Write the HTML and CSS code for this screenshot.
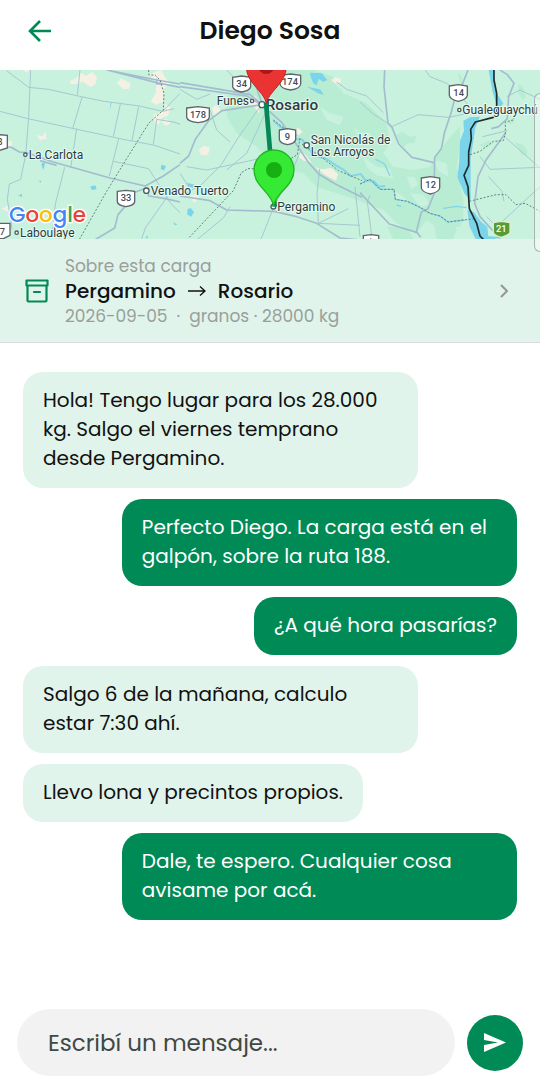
FILE: index.html
```html
<!DOCTYPE html>
<html lang="es">
<head>
<meta charset="utf-8">
<meta name="viewport" content="width=device-width, initial-scale=1">
<title>Diego Sosa</title>
<link rel="stylesheet" href="styles.css">
</head>
<body>
<div class="screen">
  <header class="topbar">
    <button class="back" type="button" aria-label="Volver">
      <svg viewBox="0 0 24 24" width="24" height="24"><path d="M23 12H2M12 2 2 12l10 10" fill="none" stroke="currentColor" stroke-width="2.6"/></svg>
    </button>
    <h1 class="title">Diego Sosa</h1>
  </header>

  <div class="map">
    <svg class="map-canvas" viewBox="0 30 1620 507" preserveAspectRatio="xMidYMid slice" role="img" aria-label="Mapa de la ruta">
      <rect class="land" x="0" y="0" width="1620" height="560"/>
      <g class="green">
        <path d="M860 30l80 0 60 20 30 50 70 30 60 60 10 60-20 30 30 40 60 10 50-10 30-50 40-50 20-20 0 60-10 60 20 100 0 60-10 20-60 10-40-30-30 40-60-30-40-40-80-30-60-20-60-20-40-40-80-20-60-60-60-40-30-50 0-60z"/>
        <path d="M1187 225l20-10 25 15 20-5-10 25-20 0-10 12-12-10zM1545 246l26 10 12 20-4 12-16-6zM1556 72l14 10 8 30-10 8-14-22zM1374 38l10 10 6 26-10-4zM1436 256l30-14 16 6-26 18zM1520 186l20-14 4 14-14 8zM1160 500l60 0 20 37-60 0zM1300 480l50 0 20 30-10 27-50 0z"/>
      </g>
      <g class="pale">
        <path d="M960 140l30 20 40 10-10 26-40-16zM1090 290l40 30 40 6 10 30-50-10-30-26zM1300 300l40 10 6 40-30-16zM1230 400l40 4 20 30-30 6zM1000 60l20-6 20 22-24 10zM1060 200l20 20 30 0 10 30-40-10zM1220 350l24 0 10 24-20 14zM1180 390l30 20 20 20-40-10z"/>
      </g>
      <g class="town">
        <path d="M211 62l18-8 14-16 14 10 20-12 14 16-4 20-16 10-24-18-12 8-24 0zM350 70l14-16 12 8 16 8-4 16-16 2zM452 125l16-28 0-26-20-30 36-11 10 20 18 22-22 14 0 40-22 8zM460 165l30-12 8-22 14 14-8 22-18 6-10 22-12-6zM482 184l18-8 12 14-14 8zM110 226l18 2 8-14 4 26-10-4-10 6zM20 240l18 6-6 18-12-6zM4 446l22-10 0 20zM70 30l18 0-8 8z"/>
        <path d="M596 270l14-12 20 4-6 22-20 2zM637 145l10-10 14 12-4 14-16 4zM745 120l20-12 16 16-4 36-14-18-16-6zM895 276l20 6 20 26-24-6-14-10zM946 322l22 6 26-4 20 18-6 20-16-8-18-10zM570 408l18-6 12 14-20 12zM880 210l16-6 12 12-12 10zM994 60l10-8 20 4-4 14-16 0zM1380 285l6-10 0 40-8 40-4-14z"/>
      </g>
      <g class="water">
        <path d="M336 126l-8 28 4-24zM126 308h10l-6 22-6-14zM270 380l16-4 4 12-14 2zM484 314l14 4-6 14-10-6zM54 406l12-4 0 10zM118 360l6 4-4 6zM520 486l12 8-8 2zM436 532l8-6-2 10z"/>
        <path d="M562 448l10-4 10 12-8 14-12-6zM562 368l22 6-6 10-16-6zM930 38l36 2 16 20-12 6-14-10-6 20-10-6-8-20zM920 80l40 8 12 16-18-4-20-12z"/>
        <path d="M1410 172l30-2-14 34-6 40-8 50 0 60 0 66-18-18-22-50 6-50 2-60 12-30-2-30zM1402 450l20 6 22 30 18 14 4 40-38 0-20-42zM1460 528l46 4-40 8zM1466 30h14l8 66 22 34-10 14-12-16-10-32z"/>
        <path class="stream" d="M820 182l20 18 22 12 14 10 14 16 18 2 10 20 30 28 30 8 30 20 24 14 20 18 30-6 14 18 26 4 14 16 20-2"/>
        <path class="stream thin" d="M1330 445l40-6 30 4M1170 348l-16-36-28-14M1190 435l14 4"/>
        <path class="stream thin" d="M1080 372l30-14 30 30 42 0 4 30 36 6 34 16 34 20 30 8 24 18 50-6"/>
      </g>

      <g class="road">
        <path d="M20 32l66 50 60 6 88 20 78 16 106 14 70 16 34-8M92 30l-6 140-8 104M240 30l-8 76M0 154l84 22 138 30 138 30 104 20 76 26M246 112l-28 94M230 206l-18 118M362 128l-22 102M416 140l-20 102M356 236l-28 112M194 322l-28 110-8 80M78 280l-16 78-34 14-6 46 10 60 4 30M340 304l106 22 66 104 28 28M424 540l12-36 66-94M460 254l10-76 50 8 20 6M488 154l52-54"/>
        <path d="M540 88l50 30 40-16M680 30l68 70 34 36M630 150l20 60 40 36M780 140l-66 94-50 80-60 60-64 36M800 150l-60 130-60 50M560 320l60 10 140-30 60-20M690 440l-20 34-80 66M822 440l-40 100M822 440l48-90 30-74M955 490l-4-90 8-74M955 490l90-44M955 490l125 6M1065 380l15 150M540 340l26 40M1010 66l30 22 60 20 50 50"/>
        <path d="M1276 30l14 20 50 20 20 14M1080 126l40 36 54 34M1175 200l80-36 90 8 60-12M1448 230l74-18M1440 290l30 38 150-6M1466 350l40 44 6 30M1620 380l-130 120-30-30M1110 405l-8 20 14 110M1518 234l102 90M1520 110l40-20 60 28M1380 156l22-24-24-30"/>
      </g>
      <g class="highway">
        <path d="M320 30l150 30 70 12M330 32l140 36 70 14M470 56l0 16 24 0M0 258l34 4 24 14 22 2 80 28 170 48 106 24 54-30 50-34M440 384l-40 14-20 36-26 30-10 40-60 36M440 384l6 24 50 8 44 10M120 302l50 14"/>
        <path d="M540 68l120 20 90 16 36 28M540 80l200 28 44 26M786 134l-120 18-40 30-40 56-20 50-26 22M786 134l60 54 40 60 40 60 30 34 50 30 80 40M540 408l90 14 50 28 142 4 68 16 60 20 70 44 60 6M790 140l-40-110"/>
        <path d="M1154 30l-2 50 12 110 12 12 20 50 40 40 66 16M1404 30l-18 46-18 24-14 56-20 60-10 50-20 26-2 110-18 44-20 10-16 64M1080 398l88 94 84 26 10 14M1500 30l22 14 20 26-16 40-4 66-26 24-22 6M1516 220l-58 80-24 50-10 80 16 40 60 66"/>
      </g>
      <g class="border">
        <path d="M446 30v14l20 2 14 14 12 40-2 50-44 40-66 106-60 98-84 148M568 532l132-140 24-54 20-12h20M820 180l34 26 36 20M900 234l-8 50-50 30-60 20M906 252l60 40 50 40 70 30"/>
        <path d="M1080 372l30-14 30 30 42 0 4 30 36 6 34 16 34 20 30 8 24 18 80-10M1410 284l30-10 40-30 30-2 6-20 0-36 24-6 8-18M1408 424l80-20 30 0 30 30 28-4 44 24"/>
      </g>
      <path class="river-line" d="M1482 30v30l8 40 0 54-10 18-54 14-14 22 2 28-8 40 0 40-14 30 12 34 4 66 22 44 10 38 20 20"/>

      <g class="shield">
        <path d="M-20 228l16-4 26 2v38l-32 10-12-6zM-20 490h50v36l-20 10h-30zM352 394l26-3 26 3v32q-2 10-26 14-24-4-26-14zM698 52l27-4 27 4v28q-2 12-27 16-25-4-27-16zM840 46l32-4 30 4v26q-2 14-30 18-30-4-32-18zM560 144l34-4 34 4v28q-2 12-34 16-32-4-34-16zM838 210l25-4 24 4v28q-2 12-24 16-23-4-25-16zM1348 78l27-4 27 4v28q-2 12-27 18-25-6-27-18zM1264 354l27-4 28 4v30q-2 12-28 18-25-6-27-18zM1090 527l23-3 23 3v40h-46z"/>
      </g>
      <path class="shield-green" d="M1480 488l24-4 26 4v30q-4 8-26 14-22-6-24-14z"/>
      <g class="shield-label">
        <text x="0" y="256">8</text><text x="7" y="524">7</text><text x="378" y="424">33</text><text x="725" y="81">34</text><text x="870" y="75">174</text><text x="594" y="174">178</text><text x="862" y="240">9</text><text x="1376" y="108">14</text><text x="1292" y="384">12</text><text class="on-green" x="1504" y="516">21</text>
      </g>
      <path d="M1109 537l5-3v3z" fill="#444b50"/>
      <g class="dot">
        <circle cx="76" cy="284" r="5"/><circle cx="50" cy="518" r="5"/><circle cx="439" cy="392" r="8"/><circle cx="756" cy="123" r="5"/><circle cx="786" cy="134" r="9"/><circle cx="920" cy="256" r="8"/><circle cx="820" cy="440" r="7"/><circle cx="1378" cy="150" r="5"/>
      </g>
      <g class="place">
        <text x="86" y="297">La Carlota</text><text x="60" y="530">Laboulaye</text><text x="452" y="404">Venado Tuerto</text><text x="650" y="136">Funes</text><text class="city" x="797" y="150">Rosario</text><text x="932" y="251">San Nicolás de</text><text x="932" y="287">Los Arroyos</text><text x="832" y="453">Pergamino</text><text x="1387" y="163">Gualeguaychú</text>
      </g>
      <text class="google" x="27" y="485"><tspan fill="#4285f4">G</tspan><tspan fill="#ea4335">o</tspan><tspan fill="#fbbc04">o</tspan><tspan fill="#4285f4">g</tspan><tspan fill="#34a853">l</tspan><tspan fill="#ea4335">e</tspan></text>

      <path class="route" d="M783 128l26 312" transform="translate(15 0)"/>
      <path d="M779 130c-6-36-60-60-60-110a60 60 0 0 1 120 0c0 50-54 74-60 110z" transform="translate(20 0)" fill="#e93433" stroke="#c51f22" stroke-width="3"/>
      <circle cx="799" cy="18" r="24" fill="#ae1519"/>
      <path d="M821 438c-6-42-59-58-59-108a60 60 0 0 1 120 0c0 50-55 66-61 108z" fill="#36e935" stroke="#20b51f" stroke-width="4"/>
      <circle cx="822" cy="330" r="24" fill="#15af12"/>
    </svg>
    <span class="map-control"></span>
  </div>

  <a class="load" href="#carga">
    <svg class="load-icon" viewBox="0 0 24 24" width="24" height="24"><path d="M1.500 1.500h21v5h-21zM2.500 6.500v15q0 1 1 1h17q1 0 1-1v-15M9 13h6" fill="none" stroke="currentColor" stroke-width="2.200" stroke-linejoin="round" stroke-linecap="round"/></svg>
    <span class="load-text">
      <span class="load-note">Sobre esta carga</span>
      <span class="load-route"><span>Pergamino</span><svg viewBox="0 0 18 12" width="18" height="12" role="img" aria-label="a"><path d="M0 6h17M12 1.500 17 6l-5 4.500" fill="none" stroke="currentColor" stroke-width="1.300"/></svg><span>Rosario</span></span>
      <span class="load-note">2026-09-05 &nbsp;·&nbsp; granos · 28000 kg</span>
    </span>
    <svg class="chevron" viewBox="0 0 8 14" width="8" height="14"><path d="M1 1l6 6-6 6" fill="none" stroke="currentColor" stroke-width="2.200"/></svg>
  </a>

  <main class="chat">
    <p class="bubble">Hola! Tengo lugar para los 28.000 kg. Salgo el viernes temprano desde Pergamino.</p>
    <p class="bubble mine">Perfecto Diego. La carga está en el galpón, sobre la ruta 188.</p>
    <p class="bubble mine">¿A qué hora pasarías?</p>
    <p class="bubble">Salgo 6 de la mañana, calculo estar 7:30 ahí.</p>
    <p class="bubble">Llevo lona y precintos propios.</p>
    <p class="bubble mine">Dale, te espero. Cualquier cosa avisame por acá.</p>
  </main>

  <form class="composer">
    <input class="field" type="text" aria-label="Mensaje" placeholder="Escribí un mensaje...">
    <button class="send" type="button" aria-label="Enviar">
      <svg viewBox="0 0 24 21" width="24" height="21"><path d="M1 1l22 9.500L1 20v-7l14-2.500L1 8z" fill="currentColor"/></svg>
    </button>
  </form>
</div>
</body>
</html>
```
FILE: styles.css
```css
* { box-sizing: border-box; }
body { margin: 0; background: #fff; color: #111; font-family: Poppins, Inter, "Open Sans", sans-serif; font-weight: 400; }
button { border: 0; padding: 0; cursor: pointer; }
svg { display: block; }

.screen { display: flex; flex-direction: column; min-height: 100vh; }

.topbar { display: grid; grid-template-columns: 48px 1fr 48px; align-items: center; height: 70px; padding: 0 16px 8px; }
.back { display: grid; place-items: center; width: 48px; height: 48px; background: none; color: #008a55; }
.title { margin: 0; text-align: center; font-size: 25px; font-weight: 600; line-height: 36px; }

.map { position: relative; }
.map-canvas { width: 100%; height: auto; }
.map-control { position: absolute; z-index: 1; top: 23px; right: 0; width: 6px; height: 159px; border: 1px solid #a9b5b0; border-right: 0; border-radius: 6px 0 0 6px; background: rgba(255, 255, 255, .4); }
.land { fill: #c8f2de; }
.green { fill: #b8edd3; }
.pale { fill: #c8f2de; }
.town { fill: #f4f0e4; }
.water { fill: #7bd5ea; }
.stream { fill: none; stroke: #82d4ec; stroke-width: 6; }
.thin { stroke-width: 4; }
.road, .highway, .border, .river-line, .route { fill: none; stroke-linejoin: round; }
.road { stroke: #a6c8d2; stroke-width: 3; }
.highway { stroke: #a3bdce; stroke-width: 5; }
.border { stroke: #65837b; stroke-width: 3; stroke-dasharray: 6 5; }
.river-line { stroke: #1e2c30; stroke-width: 5; }
.route { stroke: #078657; stroke-width: 14; }
.shield { fill: #fff; stroke: #5f6468; stroke-width: 4; }
.shield-green { fill: #559b36; stroke: #e3ecd1; stroke-width: 4; }
.shield-label { fill: #444b50; font: 500 28px Roboto, sans-serif; text-anchor: middle; }
.on-green { fill: #fff; }
.dot { fill: #fff; stroke: #4f5c60; stroke-width: 4; }
.place { fill: #2c3a40; stroke: #e8faf1; stroke-width: 6; paint-order: stroke; font: 400 36px Roboto, sans-serif; }
.city { font-size: 46px; font-weight: 500; }
.google { stroke: #fff; stroke-width: 8; paint-order: stroke; font: 500 64px Poppins, Lato, sans-serif; }

.load { display: flex; align-items: center; gap: 16px; padding: 14px 32px 13px 25px; border-bottom: 1px solid #d8dedb; background: #e1f4eb; color: #111; text-decoration: none; }
.load-icon { color: #008a55; }
.load-text { display: flex; flex: 1; flex-direction: column; }
.load-note { color: #999f9c; font-size: 17px; line-height: 26px; }
.load-route { display: flex; align-items: center; gap: 12px; font-size: 20px; font-weight: 500; line-height: 24px; }
.chevron { color: #959b98; }

.chat { display: flex; flex: 1; flex-direction: column; align-items: flex-start; gap: 11px; padding: 29px 23px; }
.bubble { max-width: 80%; margin: 0; padding: 14px 20px 15px; border-radius: 20px; background: #e1f4eb; font-size: 20px; line-height: 29px; }
.mine { align-self: flex-end; background: #008a55; color: #fff; }

.composer { display: flex; align-items: center; gap: 12px; padding: 0 17px 16px; }
.field { flex: 1; min-width: 0; height: 67px; padding: 0 31px; border: 0; border-radius: 34px; background: #f2f2f2; color: #111; font: inherit; font-size: 23px; }
.field::placeholder { color: #404944; opacity: 1; }
.send { display: grid; place-items: center; width: 56px; height: 56px; border-radius: 50%; background: #008a55; color: #fff; }
```
